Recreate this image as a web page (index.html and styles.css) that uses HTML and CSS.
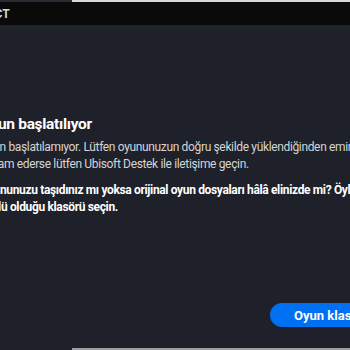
FILE: index.html
```html
<!DOCTYPE html>
<html lang="tr">
<head>
    <meta charset="UTF-8">
    <meta name="viewport" content="width=device-width, initial-scale=1.0">
    <title>Ubisoft Connect</title>
    <link rel="stylesheet" href="styles.css">
</head>
<body>
    <div class="edge">
        <div class="edge-dark"></div>
        <div class="edge-light"></div>
    </div>
    <div class="titlebar">
        <div class="titlebar-clip">
            <span class="app-name">UBISOFT CONNECT</span>
        </div>
    </div>
    <div class="titlebar-rule"></div>
    <div class="dialog">
        <h2>Oyun başlatılıyor</h2>
        <p class="message">Oyun başlatılamıyor. Lütfen oyununuzun doğru şekilde yüklendiğinden emin olun. Sorun<br>devam ederse lütfen Ubisoft Destek ile iletişime geçin.</p>
        <p class="question">Oyununuzu taşıdınız mı yoksa orijinal oyun dosyaları hâlâ elinizde mi? Öyleyse, oyunun<br>yüklü olduğu klasörü seçin.</p>
    </div>
    <div class="actions">
        <button type="button">Oyun klasörünü bul</button>
    </div>
    <div class="edge edge-bottom">
        <div class="edge-dark"></div>
        <div class="edge-light"></div>
    </div>
</body>
</html>
```

FILE: styles.css
```css
body {
    margin: 0;
    width: 350px;
    height: 350px;
    overflow: hidden;
    background-color: #1e2129;
    font-family: Roboto, "Noto Sans", sans-serif;
    display: flex;
    flex-direction: column;
}

.edge {
    display: flex;
    height: 2px;
    flex-shrink: 0;
}

.edge-dark {
    width: 72px;
    background-color: #2b2b35;
}

.edge-light {
    flex: 1;
    background-color: #d9d9dc;
}

.edge-bottom {
    margin-top: auto;
}

.edge-bottom .edge-dark {
    background-color: #1e2129;
}

.edge-bottom .edge-light {
    background-color: #9a9ca0;
}

.titlebar {
    height: 23px;
    background-color: #0a0a0b;
    display: flex;
    align-items: center;
    flex-shrink: 0;
}

.titlebar-clip {
    width: 10px;
    overflow: hidden;
    display: flex;
    justify-content: flex-end;
    white-space: nowrap;
}

.app-name {
    font-size: 12px;
    font-weight: bold;
    color: #d6d6d6;
    letter-spacing: 0.2px;
}

.titlebar-rule {
    height: 5px;
    background-color: #212429;
    flex-shrink: 0;
}

.dialog {
    margin-left: -20px;
    padding-top: 83px;
    white-space: nowrap;
}

h2 {
    margin: 0 0 4px;
    font-size: 15.5px;
    font-weight: bold;
    letter-spacing: -0.3px;
    color: #ffffff;
    line-height: 22px;
}

.message {
    margin: 0 0 9px;
    font-size: 12px;
    letter-spacing: -0.35px;
    line-height: 17px;
    color: #d4d5d8;
}

.question {
    margin: 0;
    font-size: 12px;
    font-weight: bold;
    letter-spacing: -0.35px;
    line-height: 17px;
    color: #ffffff;
}

.actions {
    margin-top: 87px;
    padding-left: 270px;
    white-space: nowrap;
}

button {
    height: 24px;
    padding: 0 24px;
    border: none;
    border-radius: 12px;
    background-color: #0070f3;
    color: #ffffff;
    font-family: inherit;
    font-size: 13px;
    font-weight: bold;
    cursor: pointer;
}
```
